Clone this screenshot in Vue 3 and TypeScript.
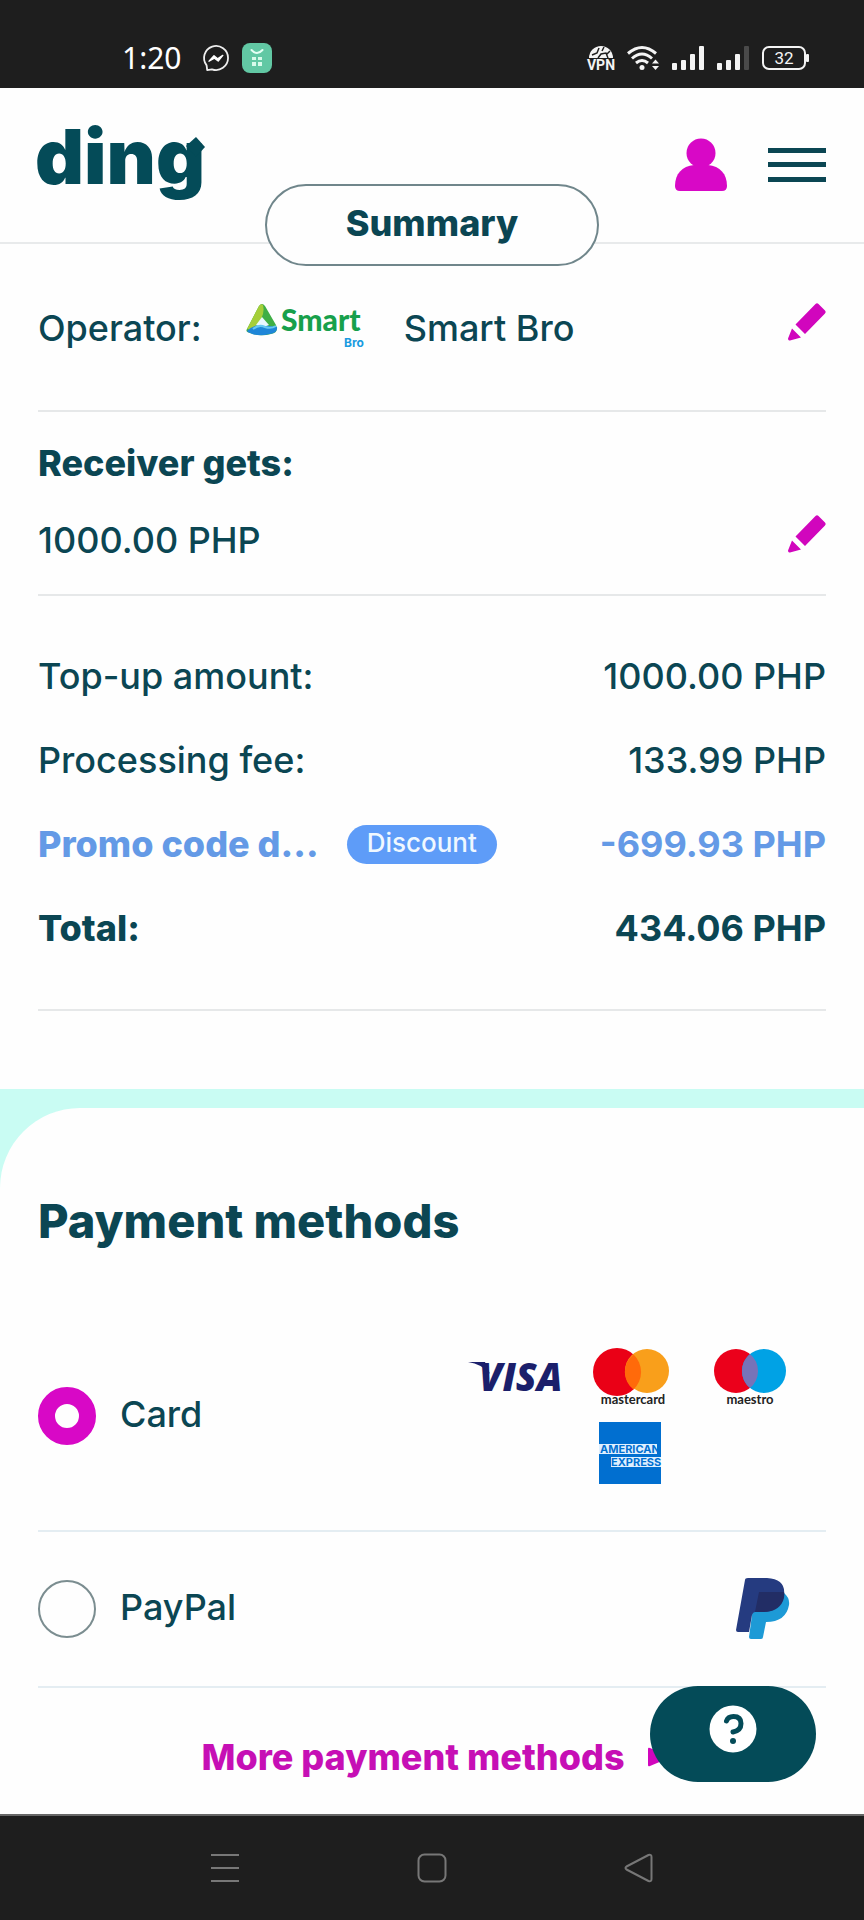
<script setup lang="ts">
import { ref } from 'vue'

interface Charge {
  label: string
  amount: string
  tone?: 'promo' | 'total'
  badge?: string
}

const charges: Charge[] = [
  { label: 'Top-up amount:', amount: '1000.00 PHP' },
  { label: 'Processing fee:', amount: '133.99 PHP' },
  { label: 'Promo code d...', amount: '-699.93 PHP', tone: 'promo', badge: 'Discount' },
  { label: 'Total:', amount: '434.06 PHP', tone: 'total' },
]

const method = ref<'card' | 'paypal'>('card')
</script>

<template>
  <div class="screen">
    <div class="status">
      <span class="clock">1:20</span>
      <svg class="messenger" width="28" height="28" viewBox="0 0 28 28" fill="none">
        <path d="M4.6 21.4A12 12 0 1 1 10 25.3L5.2 26.2Z" stroke="#eee" stroke-width="1.8" stroke-linejoin="round" />
        <path d="M7 17.2l5-5.4 3.6 3 5.2-3.4-4.6 5.6-3.8-2.8z" fill="#fff" stroke="#fff" stroke-width="1.4" stroke-linejoin="round" />
      </svg>
      <svg class="shop" width="30" height="30" viewBox="0 0 30 30">
        <rect width="30" height="30" rx="8" fill="#62c8a4" />
        <path d="M9.500 7q5.500 6 11 0" fill="none" stroke="#e4fff4" stroke-width="2" stroke-linecap="round" />
        <path d="M10 14h4v3h-4zM16 14h4v3h-4zM10 19h4v4h-4zM16 19h4v4h-4z" fill="#d8fbeb" />
      </svg>
      <div class="signals">
        <svg width="26" height="26" viewBox="0 0 26 26">
          <path d="M1 13a12 12 0 0 1 24 0z" fill="#f4f4f4" />
          <path d="M4 10l5-2 2-5M10 13l3-4 5-1 2 5M16 2l-2 4M22 6l-3 3" fill="none" stroke="#1e1e1e" stroke-width="1.500" />
          <text x="13" y="25" text-anchor="middle" class="vpn">VPN</text>
        </svg>
        <svg width="32" height="26" viewBox="0 0 32 26" fill="none" stroke="#f4f4f4" stroke-width="3">
          <path d="M1 8.500q14-12 28 0M5 13.500q10-9 20 0M9 18q6-5 12 0" />
          <circle cx="15" cy="22.500" r="2.500" fill="#f4f4f4" stroke="none" />
          <path d="M25 18.500l3.500-4 3.500 4zM25 21l3.500 4 3.500-4z" fill="#f4f4f4" stroke="none" />
        </svg>
        <svg width="32" height="26" viewBox="0 0 32 26" fill="#f4f4f4">
          <rect y="18" width="5" height="7" rx="1" /><rect x="9" y="15" width="5" height="10" rx="1" />
          <rect x="18" y="9" width="5" height="16" rx="1" /><rect x="27" y="1" width="5" height="24" rx="1" />
        </svg>
        <svg width="32" height="26" viewBox="0 0 32 26" fill="#f4f4f4">
          <rect y="18" width="5" height="7" rx="1" /><rect x="9" y="15" width="5" height="10" rx="1" />
          <rect x="18" y="9" width="5" height="16" rx="1" /><rect x="27" y="1" width="5" height="24" rx="1" fill="#4a4a4a" />
        </svg>
        <svg width="47" height="26" viewBox="0 0 47 26">
          <rect x="1" y="2" width="42" height="22" rx="6" fill="none" stroke="#f4f4f4" stroke-width="2" />
          <rect x="44" y="9" width="3" height="8" rx="1" fill="#f4f4f4" />
          <text x="22" y="19" text-anchor="middle" class="charge">32</text>
        </svg>
      </div>
    </div>

    <header class="top">
      <a class="brand" href="#" aria-label="ding">
        <svg width="170" height="92" viewBox="0 0 170 92" fill="#044b58">
          <text x="-3" y="64" class="wordmark">ding</text>
          <path d="M148 26l10-9 9 10-9 10z" />
        </svg>
      </a>
      <nav class="tools">
        <button type="button" aria-label="Account">
          <svg width="54" height="54" viewBox="0 0 54 54" fill="#d808c6">
            <circle cx="27" cy="15" r="14.500" />
            <path d="M20 27h14c12 1 19 9 19 21q0 5-5 5H6q-5 0-5-5C1 36 8 28 20 27z" />
          </svg>
        </button>
        <button type="button" aria-label="Menu">
          <svg width="58" height="36" viewBox="0 0 58 36" fill="#0b4653">
            <rect y="1" width="58" height="5" /><rect y="15" width="58" height="5" /><rect y="30" width="58" height="5" />
          </svg>
        </button>
      </nav>
      <h1 class="pill">Summary</h1>
    </header>

    <main>
      <section class="block operator">
        <div class="line">
          <span>Operator:</span>
          <svg class="smart" width="122" height="44" viewBox="0 0 122 44">
            <path d="M1 26L13 3q3-4 6 0l11 19q3 8-5 9Q14 34 4 30q-5-1-3-4z" fill="#3fae45" />
            <path d="M1 26L13 3q2-3 4-1Q20 14 7 27z" fill="#a5ce39" />
            <path d="M1 28q8-7 15-6t15 2q1 6-7 7-12 3-20-1-3-1-3-2z" fill="#1e86d8" />
            <path d="M10 22l6-8 7 8q-7 3-13 0z" fill="#e9f8ff" />
            <path d="M7 26q6-5 12-2 6 2 11-1" fill="none" stroke="#66c8f2" stroke-width="2" />
            <text x="35" y="28" class="smart-name">Smart</text>
            <text x="98" y="44" class="smart-sub">Bro</text>
          </svg>
          <span>Smart Bro</span>
          <button class="edit" type="button" aria-label="Edit operator">
            <svg width="38" height="38" viewBox="0 0 38 38" fill="#d106bd">
              <path d="M27.500 1q1.500-1.500 3 0l6.500 6.500q1.500 1.500 0 3L17 31 7.500 21.500zM4 25.500l9 9L2 37.500q-2 .500-2-2z" />
            </svg>
          </button>
        </div>
      </section>

      <section class="block receiver">
        <h2>Receiver gets:</h2>
        <div class="line">
          <span>1000.00 PHP</span>
          <button class="edit" type="button" aria-label="Edit amount">
            <svg width="38" height="38" viewBox="0 0 38 38" fill="#d106bd">
              <path d="M27.500 1q1.500-1.500 3 0l6.500 6.500q1.500 1.500 0 3L17 31 7.500 21.500zM4 25.500l9 9L2 37.500q-2 .500-2-2z" />
            </svg>
          </button>
        </div>
      </section>

      <dl class="block charges">
        <div v-for="c in charges" :key="c.label" class="charge-row" :class="c.tone">
          <dt>{{ c.label }}<span v-if="c.badge" class="badge">{{ c.badge }}</span></dt>
          <dd>{{ c.amount }}</dd>
        </div>
      </dl>
    </main>

    <section class="payment">
      <div class="sheet">
        <h2 class="title">Payment methods</h2>

        <label class="method card">
          <input v-model="method" type="radio" name="method" value="card" />
          <span class="name">Card</span>
          <span class="logos">
            <svg width="120" height="58" viewBox="0 0 120 58" fill="#1b1f6b">
              <text x="29" y="43" class="visa">VISA</text>
              <path d="M18 14h17l5 12Q32 16 18 14z" />
            </svg>
            <svg width="120" height="58" viewBox="0 0 120 58">
              <circle cx="47" cy="24" r="24" fill="#ea0016" />
              <circle cx="77" cy="23" r="22" fill="#f99f1b" />
              <path d="M63.500 6.500a24 24 0 0 1 0 35 22 22 0 0 1 0-35z" fill="#ff6a0a" />
              <text x="63" y="56" text-anchor="middle" class="scheme">mastercard</text>
            </svg>
            <svg width="120" height="58" viewBox="0 0 120 58">
              <circle cx="46" cy="23" r="22" fill="#eb001b" />
              <circle cx="74" cy="23" r="22" fill="#00a2e5" />
              <path d="M60 6a22 22 0 0 1 0 34 22 22 0 0 1 0-34z" fill="#7773b8" />
              <text x="60" y="56" text-anchor="middle" class="scheme">maestro</text>
            </svg>
            <svg width="62" height="62" viewBox="0 0 62 62">
              <rect width="62" height="62" fill="#016fd0" />
              <rect y="22" width="58" height="10" fill="#dff0ff" />
              <rect x="12" y="35" width="50" height="10" fill="#dff0ff" />
              <text x="1" y="31" class="amex">AMERICAN</text>
              <text x="12" y="44" class="amex">EXPRESS</text>
            </svg>
          </span>
        </label>

        <label class="method paypal">
          <input v-model="method" type="radio" name="method" value="paypal" />
          <span class="name">PayPal</span>
          <svg class="pp" width="54" height="62" viewBox="0 0 54 62">
            <path d="M19 15h29q6 5 5 12-3 17-23 17l-3 15q0 2-2 2H15q-2 0-2-2z" fill="#1d9ad6" />
            <path d="M9 2q0-2 3-2h19q19 1 17 17-4 17-21 17h-8q-2 0-3 3l-3 17H2q-2 0-2-2z" fill="#253b80" />
            <path d="M23 14h25q1 4-1 9-5 11-20 11h-8z" fill="#222d65" />
          </svg>
        </label>

        <div class="more">
          <a href="#">More payment methods
            <svg width="16" height="20" viewBox="0 0 16 20" fill="#d106bd"><path d="M1 2q0-2 2-1l19 8q2 1 0 2L3 19q-2 1-2-1z" /></svg>
          </a>
        </div>

        <button class="help" type="button" aria-label="Help">
          <svg width="48" height="48" viewBox="0 0 48 48" fill="none">
            <circle cx="24" cy="24" r="23.500" fill="#fff" />
            <path d="M17.500 16q1.500-4.500 7-4.500 7.500 0 7.500 7 0 7-8 8.500" stroke="#044b58" stroke-width="5" stroke-linecap="round" />
            <circle cx="24" cy="36" r="3" fill="#044b58" />
          </svg>
        </button>
      </div>
    </section>

    <nav class="system">
      <button type="button" aria-label="Recent apps">
        <svg width="30" height="30" viewBox="0 0 30 30" stroke="#777" stroke-width="2"><path d="M1 2h28M1 15h28M1 28h28" /></svg>
      </button>
      <button type="button" aria-label="Home">
        <svg width="30" height="30" viewBox="0 0 30 30" fill="none" stroke="#777" stroke-width="2"><rect x="1.500" y="1.500" width="27" height="27" rx="6" /></svg>
      </button>
      <button type="button" aria-label="Back">
        <svg width="30" height="30" viewBox="0 0 30 30" fill="none" stroke="#777" stroke-width="2" stroke-linejoin="round"><path d="M2.500 13.500L24.500 2q3-1 3 2v22q0 3-3 2L2.500 16.500q-2-1.500 0-3z" /></svg>
      </button>
    </nav>
  </div>
</template>

<style>
body {
  margin: 0;
  background: #fefefe;
}
</style>

<style scoped>
* {
  box-sizing: border-box;
}

.screen {
  display: flex;
  flex-direction: column;
  min-height: 100vh;
  background: #fefefe;
  color: #0b4653;
  font: 500 36px/40px Inter, 'Liberation Sans', sans-serif;
}

svg {
  display: block;
  flex: none;
  overflow: visible;
}

button {
  padding: 0;
  border: 0;
  background: none;
  cursor: pointer;
}

h1,
h2,
dl,
dd {
  margin: 0;
}

h2 {
  font-size: 36px;
  font-weight: 800;
}

.status {
  display: flex;
  align-items: center;
  height: 88px;
  padding: 28px 55px 0 122px;
  background: #1e1e1e;
  color: #fff;
}

.clock {
  font: 400 30px/40px 'Noto Sans', sans-serif;
}

.messenger {
  margin-left: 20px;
}

.shop {
  margin-left: 12px;
}

.signals {
  display: flex;
  align-items: center;
  gap: 13px;
  margin-left: auto;
}

.vpn {
  fill: #f4f4f4;
  font: 700 14px Roboto, sans-serif;
}

.charge {
  fill: #f4f4f4;
  font: 400 17px Roboto, sans-serif;
}

.top {
  position: relative;
  display: flex;
  align-items: flex-start;
  justify-content: space-between;
  height: 156px;
  padding: 32px 38px 0;
  border-bottom: 2px solid #e8eaeb;
}

.wordmark {
  font: 900 76px Inter, sans-serif;
}

.tools {
  display: flex;
  align-items: center;
  gap: 40px;
  padding-top: 18px;
}

.pill {
  position: absolute;
  top: 96px;
  left: 50%;
  width: 334px;
  padding: 17px 0 21px;
  transform: translateX(-50%);
  border: 2px solid #70868b;
  border-radius: 41px;
  background: #fefefe;
  font-size: 36px;
  font-weight: 800;
  text-align: center;
}

main {
  padding: 0 38px 78px;
}

.block {
  border-bottom: 2px solid #e6e8e9;
}

.line {
  display: flex;
  align-items: center;
  min-height: 50px;
}

.operator {
  padding: 59px 0 57px;
}

.smart {
  margin: 0 36px 6px 44px;
}

.smart-name {
  fill: #17a04b;
  font: 900 30px Lato, sans-serif;
}

.smart-sub {
  fill: #1a9be0;
  font: 700 12px Inter, sans-serif;
}

.edit {
  margin-left: auto;
  padding-bottom: 12px;
}

.receiver {
  padding: 31px 0 29px;
}

.receiver h2 {
  margin-bottom: 32px;
}

.charges {
  display: grid;
  gap: 44px;
  padding: 60px 0 61px;
}

.charge-row {
  display: flex;
  justify-content: space-between;
  height: 40px;
}

dt {
  display: flex;
  align-items: center;
}

.promo,
.total {
  font-weight: 700;
}

.promo {
  color: #649ae6;
}

.promo dt,
.total dt {
  font-weight: 800;
}

.badge {
  margin-left: 28px;
  padding: 0 20px 3px;
  border-radius: 20px;
  background: #5e9cf8;
  color: #f0f8ff;
  font-size: 26px;
  font-weight: 500;
  line-height: 36px;
}

.payment {
  flex: 1;
  padding-top: 19px;
  background: #c9fcf3;
}

.sheet {
  position: relative;
  padding: 87px 38px 37px;
  border-top-left-radius: 80px;
  background: #fefefe;
}

.title {
  margin-bottom: 53px;
  font-size: 47px;
  line-height: 52px;
}

.method {
  display: flex;
  align-items: center;
  gap: 24px;
  border-bottom: 2px solid #e4edf2;
}

.method input {
  appearance: none;
  flex: none;
  width: 58px;
  height: 58px;
  margin: 0;
  border: 2px solid #7b8d90;
  border-radius: 50%;
}

.method input:checked {
  border: 17px solid #d808c6;
}

.name {
  padding-bottom: 4px;
}

.card {
  padding: 48px 16px 46px 0;
}

.paypal {
  padding: 46px 36px 46px 0;
}

.logos {
  display: flex;
  flex-wrap: wrap;
  justify-content: center;
  row-gap: 16px;
  width: 360px;
  margin-left: auto;
}

.visa {
  font: italic 800 38px 'Open Sans', sans-serif;
}

.scheme {
  fill: #222;
  font: 700 13px Lato, sans-serif;
}

.amex {
  fill: #016fd0;
  font: 700 11px Inter, sans-serif;
}

.pp {
  margin-left: auto;
}

.more {
  display: flex;
  justify-content: center;
  padding-top: 49px;
}

.more a {
  display: flex;
  align-items: center;
  gap: 22px;
  color: #c60fb5;
  font-weight: 800;
  text-decoration: none;
}

.help {
  position: absolute;
  right: 48px;
  bottom: 32px;
  display: flex;
  justify-content: center;
  width: 166px;
  height: 96px;
  padding-top: 19px;
  border-radius: 48px;
  background: #044b58;
}

.system {
  display: flex;
  align-items: center;
  justify-content: center;
  gap: 177px;
  height: 106px;
  border-top: 2px solid #666;
  background: #1e1e1e;
}
</style>
